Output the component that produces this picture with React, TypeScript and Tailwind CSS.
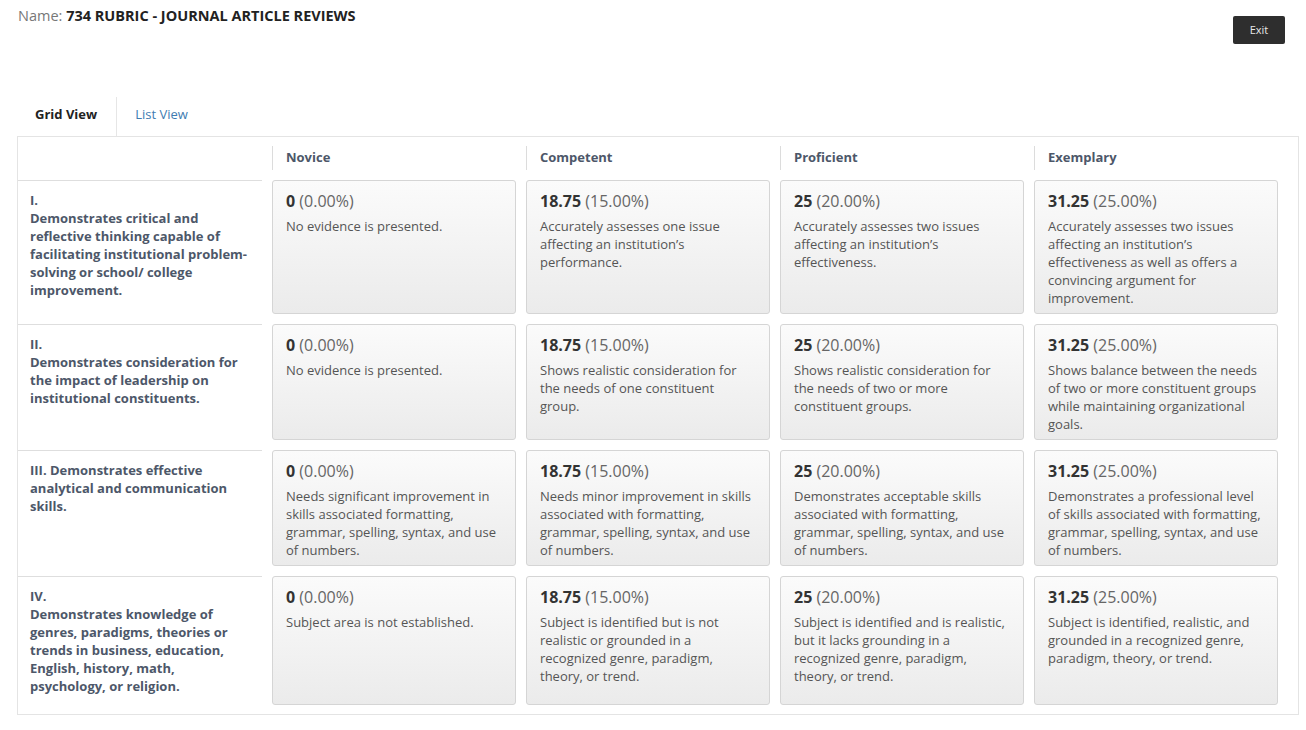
import React from 'react';

interface Level {
  score: string;
  pct: string;
  text: string;
}

interface Criterion {
  id: string;
  title: string;
  levels: Level[];
}

const headers = ['Novice', 'Competent', 'Proficient', 'Exemplary'];

const criteria: Criterion[] = [
  {
    id: '1',
    title: 'I.\nDemonstrates critical and reflective thinking capable of facilitating institutional problem-solving or school/ college improvement.',
    levels: [
      { score: '0', pct: '(0.00%)', text: 'No evidence is presented.' },
      { score: '18.75', pct: '(15.00%)', text: 'Accurately assesses one issue affecting an institution’s performance.' },
      { score: '25', pct: '(20.00%)', text: 'Accurately assesses two issues affecting an institution’s effectiveness.' },
      { score: '31.25', pct: '(25.00%)', text: 'Accurately assesses two issues affecting an institution’s effectiveness as well as offers a convincing argument for improvement.' },
    ],
  },
  {
    id: '2',
    title: 'II.\nDemonstrates consideration for the impact of leadership on institutional constituents.',
    levels: [
      { score: '0', pct: '(0.00%)', text: 'No evidence is presented.' },
      { score: '18.75', pct: '(15.00%)', text: 'Shows realistic consideration for the needs of one constituent group.' },
      { score: '25', pct: '(20.00%)', text: 'Shows realistic consideration for the needs of two or more constituent groups.' },
      { score: '31.25', pct: '(25.00%)', text: 'Shows balance between the needs of two or more constituent groups while maintaining organizational goals.' },
    ],
  },
  {
    id: '3',
    title: 'III. Demonstrates effective analytical and communication skills.',
    levels: [
      { score: '0', pct: '(0.00%)', text: 'Needs significant improvement in skills associated formatting, grammar, spelling, syntax, and use of numbers.' },
      { score: '18.75', pct: '(15.00%)', text: 'Needs minor improvement in skills associated with formatting, grammar, spelling, syntax, and use of numbers.' },
      { score: '25', pct: '(20.00%)', text: 'Demonstrates acceptable skills associated with formatting, grammar, spelling, syntax, and use of numbers.' },
      { score: '31.25', pct: '(25.00%)', text: 'Demonstrates a professional level of skills associated with formatting, grammar, spelling, syntax, and use of numbers.' },
    ],
  },
  {
    id: '4',
    title: 'IV.\nDemonstrates knowledge of genres, paradigms, theories or trends in business, education, English, history, math, psychology, or religion.',
    levels: [
      { score: '0', pct: '(0.00%)', text: 'Subject area is not established.' },
      { score: '18.75', pct: '(15.00%)', text: 'Subject is identified but is not realistic or grounded in a recognized genre, paradigm, theory, or trend.' },
      { score: '25', pct: '(20.00%)', text: 'Subject is identified and is realistic, but it lacks grounding in a recognized genre, paradigm, theory, or trend.' },
      { score: '31.25', pct: '(25.00%)', text: 'Subject is identified, realistic, and grounded in a recognized genre, paradigm, theory, or trend.' },
    ],
  },
];

const gridCols = 'grid grid-cols-[244px_repeat(4,minmax(0,1fr))] gap-x-[10px] pr-[20px]';

const LevelCard = ({ level }: { level: Level }) => (
  <div className="rounded-[3px] border border-[#d5d5d5] bg-gradient-to-b from-[#fbfbfb] to-[#ebebeb] px-[13px] pt-[10px] pb-[6px]">
    <div className="text-[16px] leading-[20px]">
      <span className="font-bold text-[#333]">{level.score}</span>{' '}
      <span className="text-[#666]">{level.pct}</span>
    </div>
    <p className="mt-[6px] text-[13px] leading-[18px] text-[#555]">{level.text}</p>
  </div>
);

const App = () => {
  return (
    <div className="min-h-screen bg-white pl-[17px] pr-[7px] pt-[7px] font-['Open_Sans',sans-serif]">
      <div className="flex items-start justify-between pr-[14px]">
        <div className="pl-[1px] text-[14.5px] leading-[18px] text-[#777]">
          Name: <span className="font-bold text-[#222]">734 RUBRIC - JOURNAL ARTICLE REVIEWS</span>
        </div>
        <button className="mt-[9px] h-[28px] w-[52px] rounded-[2px] bg-[#2e2e2e] text-[11px] text-[#e8e8e8]">
          Exit
        </button>
      </div>

      <div className="mt-[53px] flex h-[39px] text-[13px]">
        <div className="flex items-center border-r border-[#e6e6e6] pb-[4px] pl-[18px] pr-[19px] font-bold text-[#222]">
          Grid View
        </div>
        <div className="flex items-center pb-[4px] pl-[18px] text-[#3e7cb1]">List View</div>
      </div>

      <div className="border border-[#e4e4e4]">
        <div className={gridCols}>
          <div />
          {headers.map((h) => (
            <div key={h} className="pt-[9px] pb-[10px]">
              <div className="flex h-[24px] items-center border-l border-[#dcdcdc] pl-[13px] text-[13px] font-bold text-[#4d5769]">
                {h}
              </div>
            </div>
          ))}
        </div>
        <div className={`${gridCols} gap-y-[10px] pb-[9px]`}>
          {criteria.map((c) => (
            <React.Fragment key={c.id}>
              <div className="whitespace-pre-line border-t border-[#dedede] pl-[12px] pr-[10px] pt-[10px] pb-[10px] text-[13px] font-bold leading-[18px] text-[#4d5769]">
                {c.title}
              </div>
              {c.levels.map((l, i) => (
                <LevelCard key={i} level={l} />
              ))}
            </React.Fragment>
          ))}
        </div>
      </div>
    </div>
  );
};

export default App;
